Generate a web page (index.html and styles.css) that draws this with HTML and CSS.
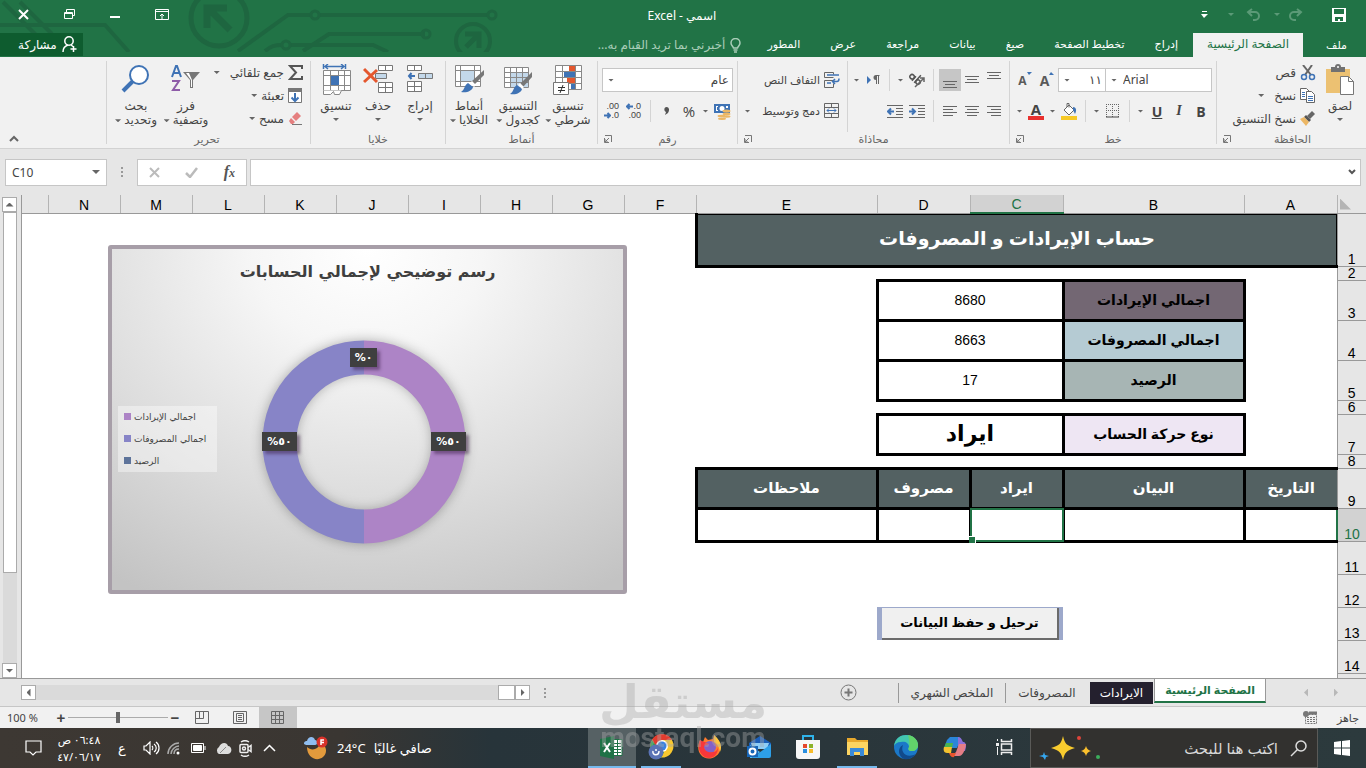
FILE: index.html
```html
<!DOCTYPE html>
<html lang="ar" dir="rtl">
<head>
<meta charset="utf-8">
<title>اسمي - Excel</title>
<link rel="stylesheet" href="styles.css">
</head>
<body>
<header class="top">
  <svg class="circuit" width="500" height="52" viewBox="0 0 500 52" aria-hidden="true" fill="none" stroke="#1e6640" stroke-width="4">
    <path d="M3 2l40 40M20 2l32 32M0 25h105l24 27"/>
    <circle cx="219" cy="18" r="28" stroke-width="5"/>
    <path d="M207 28V8h20M208 8l22 22" stroke-width="7"/>
    <path d="M238 51l50-36h23M318 15h170M265 51c6-5 10-6 17-6M291 45h82l15 7M303 51l26-17h96M489 15"/>
    <circle cx="315" cy="15" r="4" stroke-width="3"/><circle cx="286" cy="45" r="4" stroke-width="3"/>
    <circle cx="426" cy="34" r="4" stroke-width="3"/><circle cx="492" cy="15" r="4" stroke-width="3"/>
    <circle cx="473" cy="41" r="17"/><path d="M465 34h14v14M480 33l-14 14" stroke-width="5"/>
  </svg>
  <div class="titlebar">
    <div class="quick">
      <button class="tb save" aria-label="حفظ"><svg width="14" height="14"><path fill="#fff" fill-rule="evenodd" d="M0 0h14v14H0zM2 1v5h10V1zM3 9v4h3v-2h2v2h3V9z"/></svg></button>
      <button class="tb redo" aria-label="إعادة"><svg width="16" height="14" fill="none" stroke="#5b9a77" stroke-width="2"><path d="M9 1l4 3-4 4M13 4H6a4 4 0 0 0 0 8h2"/></svg></button><i class="dd dim"></i>
      <button class="tb undo" aria-label="تراجع"><svg width="16" height="14" fill="none" stroke="#5b9a77" stroke-width="2"><path d="M6 1L2 4l4 4M2 4h7a4 4 0 0 1 0 8H7"/></svg></button><i class="dd dim"></i>
      <button class="tb more" aria-label="تخصيص"><svg width="7" height="7" fill="#fff"><path d="M1 0h5v1H1zM0 3h7L3 7z"/></svg></button>
    </div>
    <div class="doc-title">اسمي - <bdi>Excel</bdi></div>
    <div class="window">
      <button class="tb" aria-label="خيارات الشريط"><svg width="14" height="12" fill="none" stroke="#fff"><path d="M.5.5h13v10H.5zM.5 2.500h13M7 10V5M5 7l2-2 2 2"/></svg></button>
      <button class="tb" aria-label="تصغير"><svg width="10" height="12"><path fill="#fff" d="M0 7h10v2H0z"/></svg></button>
      <button class="tb" aria-label="استعادة"><svg width="11" height="11" fill="none" stroke="#fff"><path d="M.5 3.500h8v6h-8zM.5 4.500h8M2.500 3V.5h8v6H8"/></svg></button>
      <button class="tb" aria-label="إغلاق"><svg width="11" height="11" fill="none" stroke="#fff" stroke-width="2"><path d="M1 1l9 9M10 1l-9 9"/></svg></button>
    </div>
  </div>
  <nav class="tabs">
    <a class="tab file" href="#">ملف</a>
    <a class="tab on" href="#">الصفحة الرئيسية</a>
    <a class="tab" href="#">إدراج</a>
    <a class="tab" href="#">تخطيط الصفحة</a>
    <a class="tab" href="#">صيغ</a>
    <a class="tab" href="#">بيانات</a>
    <a class="tab" href="#">مراجعة</a>
    <a class="tab" href="#">عرض</a>
    <a class="tab" href="#">المطور</a>
    <button class="tell"><svg width="11" height="15" fill="none" stroke="#a9cdb8" stroke-width="1.500"><path d="M3.500 10C3 8 1 7.500 1 5a4.500 4.500 0 0 1 9 0c0 2.500-2 3-2.500 5zM3.500 12h4M4 14h3"/></svg>أخبرني بما تريد القيام به...</button>
    <button class="share"><svg width="15" height="17" fill="none" stroke="#fff" stroke-width="1.500"><circle cx="7" cy="5" r="4.200"/><path d="M1 16c0-4 2-6 5-7M9 9l2 1.500M11.500 10v6M8.500 13h6"/></svg>مشاركة</button>
  </nav>
</header>

<section class="ribbon">
  <div class="group g-clip">
    <div class="body">
      <button class="big w46"><svg width="30" height="32"><path fill="#ecc172" d="M1 5h24v24H1z"/><path fill="#717171" d="M6 3h4a3 3 0 0 1 6 0h4v5H6z"/><circle cx="13" cy="3" r="1" fill="#fff"/><path fill="#fff" stroke="#777" d="M15.500 12.500h8l5 5v13h-13z"/><path fill="none" stroke="#777" d="M23.500 12.500v5h5"/></svg><span>لصق</span><i class="dd"></i></button>
      <div class="col">
        <button class="sm"><svg width="16" height="16" fill="none"><path stroke="#666" stroke-width="2" d="M3 0l8 10M12 0L5 10"/><circle cx="4" cy="12" r="2.500" stroke="#3f73b5" stroke-width="1.500"/><circle cx="12" cy="12" r="2.500" stroke="#3f73b5" stroke-width="1.500"/></svg>قص</button>
        <button class="sm"><svg width="16" height="15" fill="#fff" stroke="#666"><path d="M.5.500h6l3 3v8h-9z"/><path d="M6.500 3.500h5l3 3v8h-8z"/><path stroke="#3f73b5" d="M2 4.500h3M2 6.500h3M2 8.500h3M8 8.500h5M8 10.500h5M8 12.500h5"/></svg>نسخ<i class="dd far"></i></button>
        <button class="sm"><svg width="16" height="15"><path fill="#666" d="M12 0l3 3-5 5-3-3z"/><path fill="#555" d="M6 4l5 5-2 2-5-5z"/><path fill="#ecb765" d="M4 6l5 5-3 4L0 8z"/></svg>نسخ التنسيق</button>
      </div>
    </div>
    <div class="foot"><span>الحافظة</span><button class="launch" aria-label="إعدادات الحافظة"><svg width="8" height="8" fill="none" stroke="#777"><path d="M1 .5h6.500V7M.5 3v4.500H5M5 3L1 7M1 4v3h3"/></svg></button></div>
  </div>

  <div class="group g-font">
    <div class="body rows">
      <div class="row">
        <label class="combo ltr w107"><i class="dd"></i><select aria-label="الخط"><option>Arial</option></select></label>
        <label class="combo size"><select aria-label="حجم الخط"><option>١١</option></select><i class="dd"></i></label>
        <button class="ic"><svg width="14" height="16"><path fill="#3f73b5" d="M9 3l2-3 3 3z"/></svg><b class="fa">A</b></button>
        <button class="ic"><svg width="14" height="16"><path fill="#3f73b5" d="M9 0h5l-3 3z"/></svg><b class="fa small">A</b></button>
      </div>
      <div class="row">
        <button class="ic bold">B</button><button class="ic ital">I</button><button class="ic under">U</button><button class="dx" aria-label="تسطير"><i class="dd"></i></button><i class="sep"></i>
        <button class="ic" aria-label="حدود"><svg width="14" height="14" fill="none" stroke="#666" stroke-dasharray="1 1"><path d="M.5 0v13M6.500 0v13M12.500 0v13M0 .5h13M0 6.500h13"/><path stroke-dasharray="none" stroke="#444" d="M0 13h13"/></svg></button><button class="dx" aria-label="أنواع الحدود"><i class="dd"></i></button><i class="sep"></i>
        <button class="ic" aria-label="لون التعبئة"><svg width="17" height="17"><path fill="#f6c927" d="M0 13h16v4H0z"/><path fill="#fff" stroke="#666" d="M3 7l5-5 5 5-5 5zM6 4V.500h2v4"/><path fill="#3f73b5" d="M12 4c3 0 4 3 2 7l-2-4z"/></svg></button><button class="dx" aria-label="ألوان التعبئة"><i class="dd"></i></button>
        <button class="ic fcol">A</button><button class="dx" aria-label="ألوان الخط"><i class="dd"></i></button>
      </div>
    </div>
    <div class="foot"><span>خط</span><button class="launch" aria-label="إعدادات الخط"><svg width="8" height="8" fill="none" stroke="#777"><path d="M1 .5h6.500V7M.5 3v4.500H5M5 3L1 7M1 4v3h3"/></svg></button></div>
  </div>

  <div class="group g-align">
    <div class="body">
      <div class="rows">
        <div class="row">
          <button class="ic" aria-label="أعلى"><svg class="ln" width="14" height="16"><path d="M0 .5h14M2 3.500h10M0 6.500h14"/></svg></button>
          <button class="ic" aria-label="وسط"><svg class="ln" width="14" height="16"><path d="M0 4.500h14M2 7.500h10M0 10.500h14"/></svg></button>
          <button class="ic sel" aria-label="أسفل"><svg class="ln" width="14" height="16"><path d="M0 9.500h14M2 12.500h10M0 15.500h14"/></svg></button><i class="sep"></i>
          <button class="ic" aria-label="اتجاه النص"><svg width="17" height="16" fill="none" stroke="#555" stroke-width="1.500"><g transform="rotate(42 6 6)"><circle cx="3" cy="7" r="2.200"/><path d="M5.500 4v6M8.500 0v10"/><circle cx="11" cy="7" r="2.200"/></g><path stroke="#666" d="M6 15L15 6M11 6h4v4"/></svg></button><button class="dx" aria-label="اتجاهات"><i class="dd"></i></button><i class="sep"></i>
          <button class="ic" aria-label="اتجاه الفقرة"><svg width="13" height="10"><path fill="#3f73b5" d="M0 1l4 4-4 4z"/><path fill="#666" d="M12.500 0v1H12v8h-1V1h-1v8H9V5a2.500 2.500 0 0 1 0-5z"/></svg></button><button class="dx" aria-label="اتجاهات الفقرة"><i class="dd"></i></button>
        </div>
        <div class="row">
          <button class="ic" aria-label="يمين"><svg class="ln" width="14" height="11"><path d="M0 .5h14M4 3.500h10M0 6.500h14M4 9.500h10"/></svg></button>
          <button class="ic" aria-label="توسيط"><svg class="ln" width="14" height="11"><path d="M0 .5h14M2 3.500h10M0 6.500h14M2 9.500h10"/></svg></button>
          <button class="ic" aria-label="يسار"><svg class="ln" width="14" height="11"><path d="M0 .5h14M0 3.500h10M0 6.500h14M0 9.500h10"/></svg></button><i class="sep"></i>
          <button class="ic" aria-label="زيادة المسافة"><svg width="16" height="13" fill="none"><path stroke="#666" d="M0 .5h16M9 3.500h7M9 6.500h7M9 9.500h7M0 12.500h16"/><path stroke="#3f73b5" stroke-width="2" d="M0 6.500h6M3 3.500l3 3-3 3"/></svg></button>
          <button class="ic" aria-label="إنقاص المسافة"><svg width="16" height="13" fill="none"><path stroke="#666" d="M0 .5h16M9 3.500h7M9 6.500h7M9 9.500h7M0 12.500h16"/><path stroke="#3f73b5" stroke-width="2" d="M7 6.500H1M4 3.500l-3 3 3 3"/></svg></button>
        </div>
      </div>
      <div class="rows wrapcol">
        <div class="row"><button class="sm"><svg width="16" height="16" fill="none" stroke="#666"><path d="M.5 5.500v-5h9M.5 5.500h9M.5 15.500v-7h9M.5 15.500h9v-4M9.500 .5v2"/><path stroke="#3f73b5" stroke-width="1.500" d="M3 3h12M3 11h4M8 9.500h5c2 0 2-2 2-3M11 7L8.500 9.500 11 12"/></svg>التفاف النص</button></div>
        <div class="row"><button class="sm"><svg width="16" height="16" fill="none" stroke="#666"><path d="M.5.500h14v14H.5zM.5 4.500h14M.5 10.500h14M7.500.5v4M7.500 10.500v4"/><path stroke="#3f73b5" d="M3 7.500h9M5 5.500l-2 2 2 2M10 5.500l2 2-2 2"/></svg>دمج وتوسيط</button><button class="dx end" aria-label="خيارات الدمج"><i class="dd"></i></button></div>
      </div>
    </div>
    <div class="foot"><span>محاذاة</span><button class="launch" aria-label="إعدادات المحاذاة"><svg width="8" height="8" fill="none" stroke="#777"><path d="M1 .5h6.500V7M.5 3v4.500H5M5 3L1 7M1 4v3h3"/></svg></button></div>
  </div>

  <div class="group g-num">
    <div class="body rows">
      <div class="row"><label class="combo wide"><select aria-label="تنسيق الأرقام"><option>عام</option></select><i class="dd"></i></label></div>
      <div class="row">
        <button class="ic" aria-label="عملة"><svg width="17" height="17"><path fill="#3f73b5" d="M0 1h16v9H0z"/><path fill="#fff" d="M2 3h2v1H3v3h1v1H2zM12 3h2v2h-2z"/><circle cx="8" cy="5.500" r="2.500" fill="#fff"/><g fill="#ecb765"><ellipse cx="12.500" cy="8" rx="4" ry="1.500"/><ellipse cx="12.500" cy="11" rx="4" ry="1.200"/><ellipse cx="12.500" cy="13.500" rx="4" ry="1.200"/><ellipse cx="7.500" cy="13" rx="4" ry="1.200"/><ellipse cx="8" cy="15.700" rx="4" ry="1.200"/></g></svg></button><button class="dx" aria-label="عملات"><i class="dd"></i></button>
        <button class="ic pct">%</button><button class="ic comma" aria-label="فاصلة"><svg width="6" height="8"><path fill="#555" d="M2.500 0C5 0 6 3 4 6L1 8l1-3C-.5 4 0 0 2.500 0z"/></svg></button><i class="sep"></i>
        <button class="ic dec"><span><svg width="7" height="7" fill="none" stroke="#3f73b5" stroke-width="2"><path d="M7 3.500H1M3.500 1L1 3.500 3.500 6"/></svg>.0</span><span>.00</span></button>
        <button class="ic dec"><span>.00</span><span><svg width="7" height="7" fill="none" stroke="#3f73b5" stroke-width="2"><path d="M0 3.500h6M3.500 1L6 3.500 3.500 6"/></svg>.0</span></button>
      </div>
    </div>
    <div class="foot"><span>رقم</span><button class="launch" aria-label="إعدادات الأرقام"><svg width="8" height="8" fill="none" stroke="#777"><path d="M1 .5h6.500V7M.5 3v4.500H5M5 3L1 7M1 4v3h3"/></svg></button></div>
  </div>

  <div class="group g-style">
    <div class="body">
      <button class="big w50"><svg width="30" height="32"><path fill="#fff" stroke="#888" d="M2.500 1.500h26v24h-26zM2.500 7.500h26M2.500 13.500h26M2.500 19.500h26M9.500 1.500v24M22.500 1.500v24"/><path fill="#e4572e" d="M16 2h6v5h-6zM14 14h8v5h-8z"/><path fill="#3f73b5" d="M11 8h11v5H11zM18 20h4v5h-4z"/><path fill="#fff" stroke="#777" d="M.5 18.500h15v12H.5z"/><path stroke="#333" d="M5 23.500h7M5 26.500h7M10 21l-3 8"/></svg><span>تنسيق</span><span>شرطي <i class="dd"></i></span></button>
      <button class="big w50"><svg width="30" height="32"><path fill="#fff" stroke="#888" d="M1.500 3.500h24v20h-24z"/><path fill="#c3d8ea" d="M8 8h17v15H8z"/><path fill="none" stroke="#888" d="M1.500 8.500h24M1.500 13.500h24M1.500 18.500h24M7.500 3.500v20M13.500 3.500v20M19.500 3.500v20"/><path fill="#777" d="M29 8v5l-9 10-3-3z"/><path fill="#fff" d="M17 19l4 4-2 2-4-4z"/><path fill="#3f73b5" d="M14 21l5 4c-1 4-6 6-12 5 4-2 3-7 7-9z"/></svg><span>التنسيق</span><span>كجدول <i class="dd"></i></span></button>
      <button class="big w46"><svg width="30" height="32"><path fill="#fff" stroke="#888" d="M1.500 1.500h25v21h-25zM1.500 6.500h25M1.500 17.500h25M6.500 1.500v21M20.500 1.500v21"/><path fill="#c3d8ea" d="M7 7h13v10H7z"/><path fill="#777" d="M30 6v5L20 21l-3-3z"/><path fill="#fff" d="M18 17l4 4-2 2-4-4z"/><path fill="#3f73b5" d="M14 19l5 4c-1 4-6 6-12 5 4-2 3-7 7-9z"/></svg><span>أنماط</span><span>الخلايا <i class="dd"></i></span></button>
    </div>
    <div class="foot"><span>أنماط</span></div>
  </div>

  <div class="group g-cells">
    <div class="body">
      <button class="big w42"><svg width="28" height="32" fill="#fff" stroke="#777"><path d="M1.500 1.500h14v5h-14zM8.500 1.500v5M1.500 17.500h14v10h-14zM1.500 22.500h14M8.500 17.500v10"/><path fill="#c3d8ea" d="M12.500 9.500h14v5h-14zM19.500 9.500v5"/><path fill="none" stroke="#3f73b5" stroke-width="2" d="M9 12H3M5.500 9L3 12l2.500 3"/></svg><span>إدراج</span><i class="dd"></i></button>
      <button class="big w42"><svg width="30" height="32" fill="#fff" stroke="#777"><path d="M15.500 1.500h14v5h-14zM22.500 1.500v5M15.500 18.500h14v10h-14zM15.500 23.500h14M22.500 18.500v10"/><path fill="#c3d8ea" d="M12.500 9.500h11v5h-11z"/><path fill="none" stroke="#e4572e" stroke-width="3" d="M1 5l13 13M14 6L1 18"/></svg><span>حذف</span><i class="dd"></i></button>
      <button class="big w42"><svg width="30" height="32" fill="#fff" stroke="#888"><path d="M2.500 6.500h27v20h-27zM2.500 11.500h27M2.500 21.500h27M9.500 6.500v20M17.500 6.500v20M23.500 6.500v20"/><path fill="#3f73b5" stroke="none" d="M10 12h8v9h-8z"/><path d="M2.500 26.500v4h7l3-3 1 3h5l2-4" /><path fill="none" stroke="#3f73b5" stroke-width="1.500" d="M2.500 0v5M24.500 0v5M4 2.500h19M7 0L4 2.500 7 5M20 0l3 2.500L20 5"/></svg><span>تنسيق</span><i class="dd"></i></button>
    </div>
    <div class="foot"><span>خلايا</span></div>
  </div>

  <div class="group g-edit">
    <div class="body">
      <div class="col wide-col">
        <button class="sm"><svg width="15" height="15" fill="none" stroke="#555" stroke-width="2"><path d="M14 4V1H2l6 6.500L2 14h12v-3"/></svg>جمع تلقائي<i class="dd far"></i></button>
        <button class="sm"><svg width="15" height="16"><path fill="#fff" stroke="#777" d="M.5.500h13v14H.5z"/><path fill="#777" d="M0 0h14v4H0z"/><path fill="none" stroke="#3f73b5" stroke-width="2" d="M7 5v8M3.500 9.500L7 13l3.500-3.500"/></svg>تعبئة<i class="dd"></i></button>
        <button class="sm"><svg width="15" height="14"><path fill="#e57f7f" d="M9 0l4 4-5 5-4-4z"/><path fill="#e57f7f" d="M3 6l4 4-2 2H3L1 9z"/><path stroke="#777" d="M4 12.500h10"/></svg>مسح<i class="dd"></i></button>
      </div>
      <button class="big w50"><svg width="30" height="32" fill="none" stroke-width="2"><path stroke="#3f73b5" d="M1 13L5 2h1l4 11M3 9h5"/><path stroke="#8e5ca8" d="M1 17h7L2 26h7"/><path fill="#777" stroke="none" d="M12 8h17l-7 8v8h-3v-8z"/><path fill="#fff" stroke="none" d="M15 9h3l3 7v7h-1v-7z"/></svg><span>فرز</span><span>وتصفية <i class="dd"></i></span></button>
      <button class="big w50"><svg width="30" height="32"><path stroke="#3f73b5" stroke-width="4" d="M2 27L12 17"/><circle cx="18" cy="11" r="9" fill="#fff" stroke="#3f73b5" stroke-width="2"/></svg><span>بحث</span><span>وتحديد <i class="dd"></i></span></button>
    </div>
    <div class="foot"><span>تحرير</span></div>
  </div>
  <div class="group g-rest"><button class="launch" aria-label="طي الشريط"><svg width="10" height="7" fill="none" stroke="#666" stroke-width="2"><path d="M1 6l4-4 4 4"/></svg></button></div>
</section>

<section class="formula">
  <label class="fbox fx-input"><input type="text" aria-label="شريط الصيغة"><svg width="8" height="7" fill="none" stroke="#555" stroke-width="2"><path d="M1 1l3 3 3-3"/></svg></label>
  <div class="fbox fx-btns">
    <button aria-label="إدراج دالة"><em class="x">x</em><em>f</em></button>
    <button aria-label="إدخال"><svg width="13" height="11" fill="none" stroke="#bbb" stroke-width="2.500"><path d="M1 6l4 4 7-9"/></svg></button>
    <button aria-label="إلغاء"><svg width="11" height="11" fill="none" stroke="#bbb" stroke-width="2"><path d="M1 1l9 9M10 1l-9 9"/></svg></button>
  </div>
  <i class="dots"></i>
  <label class="fbox namebox"><input type="text" value="C10" aria-label="مربع الاسم"><i class="dd big-dd"></i></label>
</section>

<main class="sheet">
  <div class="grid">
    <table class="cells">
      <colgroup><col class="c-h"><col class="c-n"><col class="c-w"><col class="c-n"><col class="c-n"><col class="c-w"><col class="c-s"><col class="c-s"><col class="c-s"><col class="c-s"><col class="c-s"><col class="c-s"><col class="c-s"><col class="c-s"><col class="c-s"><col></colgroup>
      <thead><tr><th class="corner"><i></i></th><th>A</th><th>B</th><th class="cur">C</th><th>D</th><th>E</th><th>F</th><th>G</th><th>H</th><th>I</th><th>J</th><th>K</th><th>L</th><th>M</th><th>N</th><th></th></tr></thead>
      <tbody>
        <tr class="r53"><th>1</th><td class="title" colspan="5">حساب الإيرادات و المصروفات</td><td colspan="10"></td></tr>
        <tr class="r14"><th>2</th><td colspan="15"></td></tr>
        <tr class="r40"><th>3</th><td></td><td class="b lab plum">اجمالي الإيرادات</td><td class="b num" colspan="2">8680</td><td colspan="11"></td></tr>
        <tr class="r40"><th>4</th><td></td><td class="b lab sky">اجمالي المصروفات</td><td class="b num" colspan="2">8663</td><td colspan="11"></td></tr>
        <tr class="r40"><th>5</th><td></td><td class="b lab sage">الرصيد</td><td class="b num" colspan="2">17</td><td colspan="11"></td></tr>
        <tr class="r14"><th>6</th><td colspan="15"></td></tr>
        <tr class="r40"><th>7</th><td></td><td class="b lab lilac">نوع حركة الحساب</td><td class="b kind" colspan="2">ايراد</td><td colspan="11"></td></tr>
        <tr class="r14"><th>8</th><td colspan="15"></td></tr>
        <tr class="r40"><th>9</th><td class="b head edge">التاريخ</td><td class="b head">البيان</td><td class="b head">ايراد</td><td class="b head">مصروف</td><td class="b head">ملاحظات</td><td colspan="10"></td></tr>
        <tr class="r33"><th class="cur">10</th><td class="b edge"></td><td class="b"></td><td class="b active"><i class="cursor"></i></td><td class="b"></td><td class="b"></td><td colspan="10"></td></tr>
        <tr class="r33"><th>11</th><td colspan="15"></td></tr>
        <tr class="r33"><th>12</th><td colspan="15"></td></tr>
        <tr class="r33"><th>13</th><td colspan="2"></td><td class="post" colspan="2"><button>ترحيل و حفظ البيانات</button></td><td colspan="11"></td></tr>
        <tr class="r33"><th>14</th><td colspan="15"></td></tr>
        <tr class="r33"><th></th><td colspan="15"></td></tr>
      </tbody>
    </table>
    <figure class="chart">
      <figcaption>رسم توضيحي لإجمالي الحسابات</figcaption>
      <svg class="donut" width="240" height="240" viewBox="-120 -120 240 240">
        <defs><filter id="soft" x="-20%" y="-20%" width="140%" height="140%"><feGaussianBlur stdDeviation="6"/></filter></defs>
        <circle r="85" fill="none" stroke="#000" stroke-opacity=".28" stroke-width="34" filter="url(#soft)"/>
        <path d="M0-84.500a84.500 84.500 0 0 1 0 169" fill="none" stroke="#ad84c6" stroke-width="34"/>
        <path d="M0 84.500a84.500 84.500 0 0 1 0-169" fill="none" stroke="#8784c7" stroke-width="34"/>
      </svg>
      <b class="pt p-top">٠%</b><b class="pt p-left">٥٠%</b><b class="pt p-right">٥٠%</b>
      <ul class="legend"><li class="k1">اجمالي الإيرادات</li><li class="k2">اجمالي المصروفات</li><li class="k3">الرصيد</li></ul>
    </figure>
  </div>
  <div class="vscroll">
    <button aria-label="أعلى"><i class="up"></i></button>
    <div class="vtrack"><div class="vthumb"></div></div>
    <button aria-label="أسفل"><i class="down"></i></button>
  </div>
</main>

<section class="sheetbar">
  <div class="nav"><i class="tri r"></i><i class="tri l"></i></div>
  <button class="st on">الصفحة الرئيسية</button>
  <button class="st dark">الايرادات</button>
  <button class="st">المصروفات</button>
  <button class="st last">الملخص الشهري</button>
  <button class="plus" aria-label="ورقة جديدة"><svg width="17" height="17" fill="none" stroke="#777"><circle cx="8.500" cy="8.500" r="7.500"/><path stroke-width="2" d="M4.500 8.500h8M8.500 4.500v8"/></svg></button>
  <span class="grow"></span>
  <i class="dots"></i>
  <div class="hscroll">
    <button aria-label="يمين"><i class="tri r dk"></i></button><div class="hthumb"></div><div class="htrack"></div><button aria-label="يسار"><i class="tri l dk"></i></button>
  </div>
</section>

<footer class="status">
  <span class="ready">جاهز</span>
  <svg width="14" height="13" fill="none" stroke="#777"><path d="M2.500 3.500h11v9h-11zM4 6.500h8M4 8.500h8M4 10.500h8" stroke-dasharray="2 1"/><path stroke-width="3" d="M6 2h8"/><circle cx="3" cy="3" r="3" fill="#777" stroke="none"/></svg>
  <span class="grow"></span>
  <button class="view on" aria-label="عادي"><svg width="14" height="13" fill="none" stroke="#666"><path d="M.5.500h12v12H.5zM.5 4.500h12M.5 8.500h12M4.500.5v12M8.500.5v12"/></svg></button>
  <button class="view" aria-label="تخطيط الصفحة"><svg width="14" height="13" fill="none" stroke="#666"><path d="M.5.500h13v12H.5zM3.500 2.500h7v8h-7zM5 4.500h4M5 6.500h4M5 8.500h4"/></svg></button>
  <button class="view" aria-label="فواصل الصفحات"><svg width="14" height="13" fill="none" stroke="#666"><path d="M.5.500h13v12H.5zM4.500.5v7M8.500.5v7M.5 7.500h8"/></svg></button>
  <div class="zoom"><button aria-label="تصغير">−</button><input type="range" aria-label="تكبير" value="50"><button aria-label="تكبير">+</button></div>
  <span class="pctv" dir="ltr">100 %</span>
</footer>

<nav class="taskbar">
  <button class="start" aria-label="ابدأ"><svg width="16" height="16" fill="#fff"><path d="M0 2l7-1v6.500H0zM8 1l8-1v7.500H8zM0 8.500h7V15l-7-1zM8 8.500h8V16l-8-1z"/></svg></button>
  <label class="search"><svg width="17" height="17" fill="none" stroke="#ddd" stroke-width="1.500"><circle cx="11" cy="6" r="5"/><path d="M7.500 9.500L1 16"/></svg><input type="text" placeholder="اكتب هنا للبحث">
    <svg width="62" height="26"><path fill="#f8cb2e" d="M24 1c2 8 3 9 12 12-9 3-10 4-12 12-2-8-3-9-12-12 9-3 10-4 12-12z"/><path fill="#fbc02d" d="M47 11c1 3 2 4 5 5-3 1-4 2-5 5-1-3-2-4-5-5 3-1 4-2 5-5z"/><path fill="#35a7f0" d="M5 17l1 3 4 1-3 1-1 3-2-3-4-1 4-1z"/><circle cx="40" cy="3" r="2" fill="#e0443a"/><circle cx="59" cy="22" r="2" fill="#3cae5c"/></svg></label>
  <div class="apps">
    <button aria-label="عرض المهام"><svg width="17" height="16" fill="none" stroke="#eee"><path stroke-width="1.500" d="M5.500 0v2.500h10V0M5.500 16v-2.500h10V16M5.500 5h10v6h-10z"/><path d="M1.500 0v2M1.500 8v8"/><path stroke-width="3" d="M0 5.500h3"/></svg></button>
    <button aria-label="Copilot"><svg width="24" height="24"><path fill="#2b86d9" d="M7 2h9l2 2-4 9H1l3-8z"/><path fill="#4bb44e" d="M3 8h7l-1 5H1z"/><path fill="#f4c22f" d="M1 12h8l-1 6H4c-3 0-4-3-3-6z"/><path fill="#8b6fd8" d="M15 2c3 0 4 3 5 5h1c3 2 2 6 1 9h-7z"/><path fill="#e57d86" d="M16 9h7c-1 6-3 12-7 12H9l4-4z"/><path fill="#e8552e" d="M6 18h7l-2 4c-3 1-4-2-5-4z"/></svg></button>
    <button aria-label="Edge"><svg width="26" height="26" viewBox="0 0 26 26"><circle cx="13" cy="13" r="12" fill="#1b78c8"/><path fill="#43c7b0" d="M1 12C2 4 8 1 13 1c7 0 12 5 12 10 0 4-3 6-6 6-4 0-4-2-3-4 0-4-4-6-8-5-4 0-6 2-7 4z"/><path fill="#62d36b" d="M15 1c6 1 10 5 10 10 0 4-3 6-6 6-4 0-4-2-3-4 1-3 0-8-1-12z"/><path fill="#114a8c" d="M10 11c-3 7 3 14 13 9-3 4-8 6-12 5-6-3-7-11-1-14z"/></svg></button>
    <button class="run" aria-label="مستكشف الملفات"><svg width="24" height="24"><path fill="#e8a92d" d="M2 3h8l2 2h11v5H2z"/><path fill="#fcd462" d="M2 7h21v13H2z"/><path fill="#3a8ad8" d="M5 13h14v8h-4v-4H9v4H5z"/></svg></button>
    <button aria-label="المتجر"><svg width="24" height="24"><path fill="none" stroke="#2fb3ea" stroke-width="2" d="M7 6V1h10v5"/><path fill="#f7f7f7" d="M0 5h24v16a3 3 0 0 1-3 3H3a3 3 0 0 1-3-3z"/><path fill="#e5482d" d="M7 9h4v4H7z"/><path fill="#8cb32b" d="M13 9h4v4h-4z"/><path fill="#2a8fe0" d="M7 14h4v4H7z"/><path fill="#f8bd2b" d="M13 14h4v4h-4z"/></svg></button>
    <button aria-label="البريد"><svg width="24" height="24"><path fill="#1c5fb8" d="M2 8l11-7 11 7v5H2z"/><path fill="#8ecdf6" d="M4 8h18l-2 6H6z"/><path fill="#2d9fe8" d="M24 9v12a2 2 0 0 1-2 2H5z"/><path fill="#4fb7f2" d="M3 10l10 7-8 6H3z"/><path fill="#1766b8" d="M0 11h11v11H0z"/><circle cx="5.500" cy="16.500" r="3" fill="none" stroke="#fff" stroke-width="2"/></svg></button>
    <button aria-label="Firefox"><svg width="24" height="24"><path fill="#ff7b2e" d="M2 5l3 2 2-5 3 3 5-1 1-4 4 5c4 6 3 13-2 16-5 4-12 3-15-1C-1 16 0 9 2 5z"/><circle cx="12" cy="12" r="6" fill="#8460c8"/><path fill="#f7373a" d="M2 5c3 2 6 2 9 4l-5 2c0 5 4 7 9 6 3 0 4-2 5-4 0 6-4 10-9 10C4 23-2 14 2 5z"/><path fill="#ffc53b" d="M16 0c5 4 9 10 6 17-1-6-3-8-6-10z"/></svg></button>
    <button class="run" aria-label="Chrome"><svg width="26" height="26"><circle cx="14" cy="12" r="11.500" fill="#f8c82f"/><path fill="#e33b2e" d="M4 6C8-2 20-2 24 6H14l-5 8z"/><path fill="#259b4b" d="M4 6l6 9 6 3-3 6C4 23 0 14 4 6z"/><circle cx="14" cy="12" r="6" fill="#fff"/><circle cx="14" cy="12" r="4.500" fill="#3b82e0"/><circle cx="8" cy="18" r="7.500" fill="#5a73b5"/><path fill="none" stroke="#fff" stroke-width="1.500" d="M5 17c-1 5 6 5 6 0"/><circle cx="8" cy="16" r="1" fill="#fff"/></svg></button>
    <button class="run act" aria-label="Excel"><svg width="24" height="24"><path fill="#fff" stroke="#1f7246" d="M12 4.500h10v16H12z"/><path stroke="#1f7246" d="M13 8.500h8M13 11.500h8M13 14.500h8M13 17.500h8M17.500 5v15"/><path fill="#1f7246" d="M0 4l14-3v23L0 21z"/><path fill="none" stroke="#fff" stroke-width="2" d="M4 8l6 9M10 8l-6 9"/></svg></button>
  </div>
  <span class="grow"></span>
  <div class="tray">
    <span class="weather"><span>صافي غالبًا</span><span>24°C</span><svg width="26" height="24"><path fill="#e39a3c" d="M4 11c4 4 11 3 13-3 8 1 7 10 3 13-6 5-16 1-16-10z"/><path fill="#8fbdf0" d="M1 8c0-3 2-3 3-3 1-5 7-5 8-1 3 0 3 5 0 5H3z"/><circle cx="19" cy="6" r="5.500" fill="#d8322a"/><path stroke="#fff" stroke-width="1.500" fill="none" d="M21 4h-3v5M18 6.500h3"/></svg></span>
    <svg class="t" width="13" height="8" fill="none" stroke="#fff" stroke-width="1.500"><path d="M1 7l5.500-5.500L12 7"/></svg>
    <svg class="t" width="13" height="17" fill="none" stroke="#eee" stroke-width="1.500"><path d="M2 2c3-2 5-2 8 0M2 15c3 2 5 2 8 0"/><rect x="1" y="4.500" width="8" height="8" rx="1"/><circle cx="5" cy="8.500" r="1.500"/><path d="M9 7.500l3-2v6l-3-2"/></svg>
    <svg class="t" width="17" height="12"><path fill="#ddd" d="M4 12a4 4 0 0 1 0-7C6 0 12 0 13 4c4 0 5 7 0 8z"/><path stroke="#888" d="M5 11l6-6"/></svg>
    <svg class="t" width="15" height="10" fill="none" stroke="#fff"><path d="M.5.500h12v9H.5zM14 3v4"/><path fill="#fff" d="M2.500 2.500h8v5h-8z"/></svg>
    <svg class="t" width="13" height="13" fill="none" stroke="#aaa" stroke-width="1.500"><path d="M1 12C1 6 6 1 12 1M4 12c0-4 4-8 8-8M7 12c0-3 2-5 5-5"/><circle cx="11" cy="11" r="1.500" fill="#fff" stroke="none"/></svg>
    <svg class="t" width="17" height="14" fill="none" stroke="#fff" stroke-width="1.200"><path d="M1 5h2l4-4v12L3 9H1zM9 5c1 1 1 3 0 4M11 3c3 2 3 6 0 8M13 1c4 3 4 9 0 12"/></svg>
    <span class="lang">ع</span>
    <span class="clock"><span>٠٦:٤٨ ص</span><span>٤٧/٠٦/١٧</span></span>
    <svg class="note" width="17" height="16" fill="none" stroke="#fff" stroke-width="1.200"><path d="M1 1h15v11h-5l-3 3-3-3H1z"/></svg>
  </div>
</nav>
<div class="brand" aria-hidden="true"><span class="brand-ar">مستقل</span><span class="brand-en" dir="ltr">mostaql.com</span></div>
</body>
</html>
```
FILE: styles.css
```css
* { box-sizing: border-box; }
html, body { height: 100%; margin: 0; }
body {
  display: flex; flex-direction: column; position: relative; overflow: hidden;
  background: #e6e6e6; color: #444;
  font: 11px/14px "Noto Sans", "DejaVu Sans", sans-serif;
}
button, input, select { font: inherit; color: inherit; background: none; border: 0; padding: 0; margin: 0; outline: 0; }
a { color: inherit; text-decoration: none; }
svg { display: block; flex: none; }
.grow { flex: 1; }
.dd { display: inline-block; flex: none; width: 6px; height: 3px; background: #666; clip-path: polygon(0 0, 100% 0, 50% 100%); vertical-align: middle; }
.dd.dim { background: #5b9a77; }
.big-dd { width: 8px; height: 4px; }

/* Title bar and tabs */
.top { position: relative; flex: none; background: #217346; color: #fff; }
.circuit { position: absolute; left: 0; top: 0; }
.titlebar { position: relative; display: grid; grid-template-columns: 1fr auto 1fr; align-items: center; height: 33px; padding: 0 20px 4px 18px; }
.quick { display: flex; align-items: center; }
.redo { margin: 0 28px 0 8px; }
.undo { margin: 0 12px; }
.more { margin-right: 20px; }
.window { display: flex; justify-content: flex-end; align-items: center; gap: 35px; }
.doc-title { font-size: 12px; line-height: 20px; padding-top: 3px; }
.tabs { position: relative; display: flex; height: 24px; padding-right: 5px; }
.tab { display: flex; align-items: center; padding: 0 15px 2px; }
.tab.on { padding: 0 14px 2px; background: #f1f1f1; color: #217346; font-size: 12px; }
.tab.file { padding: 0 14px 0 23px; }
.tell { display: flex; align-items: center; gap: 5px; margin-right: 11px; color: #a9cdb8; font-size: 12px; }
.share { display: flex; align-items: center; gap: 5px; height: 23px; margin-right: auto; padding: 0 6px 0 18px; background: #0e5c2f; font-size: 12px; }

/* Ribbon */
.ribbon { flex: none; display: flex; height: 92px; padding: 4px 0 0; background: #f1f1f1; border-bottom: 1px solid #d2d2d2; }
.group { position: relative; display: flex; flex-direction: column; flex: none; height: 83px; border-left: 1px solid #d4d4d4; padding: 0 4px; }
.g-clip { width: 150px; padding-right: 2px; }
.g-font { width: 207px; }
.g-align { width: 272px; }
.g-num { width: 140px; }
.g-style { width: 152px; }
.g-cells { width: 135px; }
.g-edit { width: 204px; padding-right: 7px; }
.g-rest { flex: 1; border: 0; justify-content: flex-end; align-items: flex-end; padding-left: 8px; }
.body { display: flex; flex: 1; }
.foot { display: grid; grid-template-columns: 12px 1fr 12px; align-items: center; height: 12px; color: #666; }
.foot span { grid-column: 2; text-align: center; }
.launch { display: grid; place-items: center; width: 12px; height: 12px; }
.col { display: flex; flex-direction: column; align-items: flex-start; }
.sm { display: flex; align-items: center; gap: 4px; height: 23px; font-size: 12px; white-space: nowrap; }
.sm .far { margin-right: 6px; }
.wide-col { width: 94px; }
.big { display: flex; flex-direction: column; align-items: center; flex: none; padding-top: 3px; height: 70px; font-size: 12px; white-space: nowrap; }
.big svg { margin-bottom: 3px; }
.big > .dd { margin-top: 5px; }
.w42 { width: 42px; }
.w46 { width: 48px; }
.w50 { width: 50px; }
.rows { display: flex; flex-direction: column; gap: 7px; padding-top: 7px; }
.row { display: flex; align-items: center; height: 24px; }
.ic { position: relative; display: grid; place-items: center; width: 22px; height: 22px; flex: none; }
.ic.sel { background: #c6c6c6; }
.dx { display: grid; place-items: center; width: 11px; height: 22px; flex: none; }
.dx.end { margin-right: auto; }
.sep { width: 1px; height: 22px; margin: 0 5px; background: #d4d4d4; flex: none; }
.ln { fill: none; stroke: #666; }
.bold { font: bold 14px "Open Sans", sans-serif; }
.ital { font: italic bold 14px "Liberation Serif", serif; }
.under { font: bold 14px "Open Sans", sans-serif; text-decoration: underline; }
.fa { grid-area: 1 / 1; font: bold 14px "Open Sans", sans-serif; color: #5a5a5a; padding-right: 5px; }
.fa.small { font-size: 12px; }
.ic svg { grid-area: 1 / 1; }
.fcol { font: bold 15px/13px "Open Sans", sans-serif; height: 17px; width: 16px; margin: 0 3px; border-bottom: 4px solid #e8312f; }
.pct { font: 15px "Open Sans", sans-serif; }
.dec { display: flex; flex-direction: column; justify-content: center; direction: ltr; align-items: flex-end; font: 9px/9px "Liberation Sans", sans-serif; padding-right: 4px; }
.dec span { display: flex; align-items: center; height: 9px; }
.combo { display: flex; align-items: center; height: 24px; padding-left: 5px; background: #fff; border: 1px solid #c6c6c6; }
.combo select { appearance: none; flex: 1; min-width: 0; height: 20px; padding: 0 3px; font-size: 12px; }
.combo.ltr { direction: ltr; }
.combo.ltr select { padding-left: 6px; }
.w107 { width: 107px; }
.size { width: 47px; border-right: 0; }
.wide { width: 100%; }
.wrapcol { flex: 1; margin-right: 3px; padding-right: 7px; border-right: 1px solid #d4d4d4; }
.wrapcol .sm { font-size: 11px; }

/* Formula bar */
.formula { flex: none; display: flex; align-items: center; height: 46px; padding: 0 5px; }
.fbox { display: flex; align-items: center; height: 27px; background: #fff; border: 1px solid #c6c6c6; }
.fx-input { flex: 1; direction: ltr; padding-right: 4px; }
.fx-input input { flex: 1; height: 24px; }
.fx-btns { width: 110px; margin-right: 3px; justify-content: space-between; padding: 0 11px; }
.fx-btns button { display: flex; align-items: baseline; }
.fx-btns em { font: italic bold 16px "Liberation Serif", serif; color: #555; }
.fx-btns .x { font-size: 12px; }
.dots { width: 2px; height: 10px; margin: 0 14px; background: repeating-linear-gradient(#999 0 2px, transparent 2px 4px); }
.namebox { width: 102px; direction: ltr; padding: 0 6px; }
.namebox input { flex: 1; min-width: 0; font: 12px "Noto Sans", sans-serif; }

/* Worksheet */
.sheet { flex: 1; min-height: 0; display: flex; overflow: hidden; border-bottom: 1px solid #999; }
.grid { position: relative; flex: 1; min-width: 0; overflow: hidden; background: #fff; }
.cells { width: 100%; table-layout: fixed; border-collapse: collapse; color: #000; font: 14px/13px "Liberation Sans", "DejaVu Sans", sans-serif; }
.cells th, .cells td { padding: 0; }
.c-h { width: 29px; }
.c-n { width: 93px; }
.c-w { width: 181px; }
.c-s { width: 72px; }
.cells thead th { height: 18px; background: #e6e6e6; font-weight: normal; border: solid #b4b4b4; border-width: 0 0 1px 1px; border-bottom-color: #999; vertical-align: bottom; padding-bottom: 1px; }
.cells thead th:last-child { border-left: 0; }
.cells thead .cur { background: #d2d2d2; color: #217346; border-bottom: 2px solid #217346; }
.corner i { display: block; width: 11px; height: 11px; margin: 0 15px 2px 0; background: #b4b4b4; clip-path: polygon(0 0, 100% 100%, 0 100%); }
.cells tbody th { background: #e6e6e6; font-weight: normal; vertical-align: bottom; border: solid #999; border-width: 0 0 1px 1px; }
.cells tbody .cur { background: #d2d2d2; color: #217346; border-left: 2px solid #217346; }
.cells tbody td { text-align: center; vertical-align: middle; }
.r53 { height: 53px; }
.r14 { height: 14px; }
.r40 { height: 40px; }
.r33 { height: 33px; }
.cells .b { border: 3px solid #000; }
.cells .edge { border-right: 0; }
.cells .title { background: #536162; color: #fff; border: solid #000; border-width: 0 0 3px 3px; box-shadow: inset -1px 1px #000; font-size: 19px; font-weight: bold; line-height: 26px; }
.cells .lab { font-size: 14px; font-weight: bold; line-height: 20px; }
.cells .kind { font-size: 22px; font-weight: bold; line-height: 26px; }
.cells .head { background: #536162; color: #fff; font-size: 15px; font-weight: bold; line-height: 20px; }
.plum { background: #736773; }
.sky { background: #b5cbd3; }
.sage { background: #a7b5b4; }
.lilac { background: #eee6f3; }
.active { position: relative; }
.cursor { position: absolute; inset: -2px; border: 2px solid #217346; }
.cursor::after { content: ""; position: absolute; left: -3px; bottom: -3px; width: 6px; height: 6px; background: #217346; border: solid #fff; border-width: 1px 1px 0 0; }
.cells .post { background: #9da9cb; padding: 0 4px 0 5px; }
.post button { width: 100%; height: 32px; background: #f0f0f0; border: solid #6b6b6b; border-width: 0 2px 2px 0; font-size: 13px; font-weight: bold; color: #000; }

/* Chart */
.chart { position: absolute; left: 86px; top: 50px; width: 519px; height: 349px; margin: 0; border: 4px solid #a79ea8; border-radius: 3px; background: radial-gradient(ellipse 90% 115% at 50% 0, #fff 0, #f6f6f6 25%, #dcdcdc 65%, #c3c3c3 100%); }
.chart figcaption { padding-top: 9px; text-align: center; font: bold 16px/28px "DejaVu Sans", sans-serif; color: #3f3f3f; }
.donut { position: absolute; left: 132px; top: 73px; }
.pt { position: absolute; width: 35px; height: 19px; background: #3f3f3f; color: #fff; text-align: center; font: bold 11px/19px "DejaVu Sans", sans-serif; box-shadow: 3px 3px 3px rgba(60, 30, 70, .5); }
.p-top { left: 238px; top: 99px; width: 27px; }
.p-left { left: 150px; top: 183px; }
.p-right { left: 319px; top: 183px; }
.legend { position: absolute; left: 6px; top: 157px; width: 99px; margin: 0; padding: 0 0 0 6px; list-style: none; direction: ltr; background: rgba(255, 255, 255, .4); font: 9px/22px "DejaVu Sans", sans-serif; color: #3f3f3f; white-space: nowrap; }
.legend li::before { content: ""; display: inline-block; width: 7px; height: 7px; margin-right: 3px; background: #ad84c6; }
.legend .k2::before { background: #8784c7; }
.legend .k3::before { background: #5d739a; }

/* Scroll bars */
.vscroll { flex: none; width: 22px; display: flex; flex-direction: column; padding: 2px 4px 0 3px; border-right: 1px solid #999; }
.vscroll button { display: grid; place-items: center; width: 15px; height: 15px; background: #fff; border: 1px solid #ababab; flex: none; }
.vtrack { flex: 1; background: #dadada; }
.vthumb { height: 80%; background: #fff; border: 1px solid #ababab; }
.up, .down { width: 8px; height: 4px; background: #666; }
.up { clip-path: polygon(50% 0, 100% 100%, 0 100%); }
.down { clip-path: polygon(0 0, 100% 0, 50% 100%); }
.tri { width: 4px; height: 8px; background: #b8b8b8; }
.tri.r { clip-path: polygon(0 0, 100% 50%, 0 100%); }
.tri.l { clip-path: polygon(100% 0, 100% 100%, 0 50%); }
.tri.dk { background: #666; }

/* Sheet tabs */
.sheetbar { flex: none; display: flex; align-items: center; height: 27px; font-size: 12px; }
.nav { display: flex; gap: 26px; width: 100px; padding-right: 28px; }
.st { height: 20px; padding: 0 12px; border-left: 1px solid #999; white-space: nowrap; }
.st.on { align-self: flex-start; height: 24px; padding: 0 10px; background: #fff; color: #217346; font-size: 11px; font-weight: bold; border: solid #999; border-width: 0 1px; border-bottom: 2px solid #217346; margin-left: 1px; }
.st.dark { height: 22px; padding: 0 10px; background: #24202e; color: #fff; border: 0; margin-left: 2px; }
.plus { margin-right: 41px; }
.hscroll { display: flex; height: 15px; width: 509px; margin-left: 21px; background: #dadada; }
.hscroll button { display: grid; place-items: center; width: 15px; background: #fff; border: 1px solid #ababab; }
.hthumb { width: 17px; background: #fff; border: 1px solid #ababab; }
.htrack { flex: 1; }
.sheetbar .dots { margin: 0 0 0 14px; }

/* Status bar */
.status { flex: none; display: flex; align-items: center; height: 22px; padding: 0 7px; background: #f1f1f1; border-top: 1px solid #c6c6c6; }
.ready { margin-left: 20px; }
.view { display: grid; place-items: center; width: 38px; height: 21px; }
.view.on { background: #c6c6c6; }
.zoom { display: flex; align-items: center; gap: 2px; margin-right: 3px; }
.zoom button { width: 10px; font: bold 15px/20px "Liberation Sans", sans-serif; }
.zoom input { appearance: none; width: 100px; height: 12px; background: linear-gradient(#ababab, #ababab) center / 100% 1px no-repeat; }
.zoom input::-webkit-slider-thumb { appearance: none; width: 4px; height: 11px; background: #666; }
.pctv { margin-right: 18px; }

/* Taskbar */
.taskbar { flex: none; display: flex; height: 40px; background: linear-gradient(90deg, #3d3833 0, #3a3632 25%, #27343a 36%, #2a363b 60%, #2c3a3d 100%); color: #fff; }
.start { width: 48px; display: grid; place-items: center; }
.search { display: flex; align-items: center; width: 288px; padding: 0 10px 0 8px; background: #32312f; border: 1px solid #5a5a58; }
.search input { flex: 1; min-width: 0; height: 30px; padding-right: 12px; font-size: 15px; }
.search input::placeholder { color: #d8d8d8; opacity: 1; }
.apps { display: flex; gap: 1px; margin-right: 2px; }
.apps button { width: 48px; height: 40px; display: grid; place-items: center; border-bottom: 2px solid transparent; }
.apps .run { width: 40px; margin: 0 4px; border-color: #76b9ed; }
.apps .act { width: 48px; margin: 0; background: #566164; }
.tray { display: flex; align-items: center; }
.weather { display: flex; align-items: center; gap: 8px; font-size: 13px; margin-left: 23px; }
.t { width: 17px; margin-left: 7px; }
.lang { width: 20px; margin: 0 4px 0 6px; text-align: center; font-size: 13px; }
.clock { display: flex; flex-direction: column; align-items: center; width: 54px; line-height: 17px; }
.note { margin: 0 10px 0 25px; }

/* Watermark */
.brand { position: absolute; left: 0; right: 0; bottom: 18px; display: flex; flex-direction: column; align-items: center; pointer-events: none; color: #aaa; opacity: .4; }
.brand-ar { font: bold 46px/48px "DejaVu Sans", sans-serif; }
.brand-en { font: bold 28px/24px "Roboto", sans-serif; }
```
